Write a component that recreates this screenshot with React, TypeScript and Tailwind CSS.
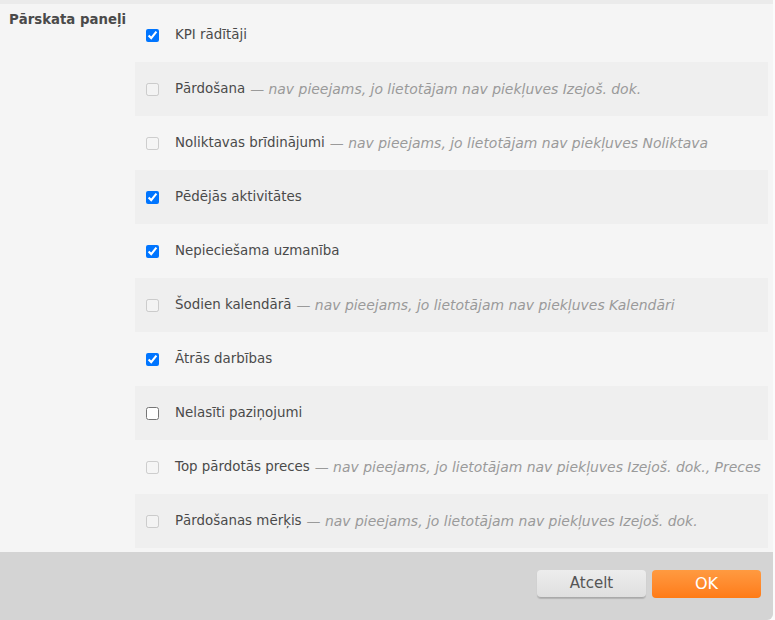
import React from "react";

type Panel = {
  id: string;
  label: string;
  checked?: boolean;
  locked?: string;
};

const panels: Panel[] = [
  { id: "kpi", label: "KPI rādītāji", checked: true },
  { id: "sales", label: "Pārdošana", locked: "Izejoš. dok." },
  { id: "stock", label: "Noliktavas brīdinājumi", locked: "Noliktava" },
  { id: "activity", label: "Pēdējās aktivitātes", checked: true },
  { id: "attention", label: "Nepieciešama uzmanība", checked: true },
  { id: "calendar", label: "Šodien kalendārā", locked: "Kalendāri" },
  { id: "quick", label: "Ātrās darbības", checked: true },
  { id: "unread", label: "Nelasīti paziņojumi" },
  { id: "top", label: "Top pārdotās preces", locked: "Izejoš. dok., Preces" },
  { id: "goal", label: "Pārdošanas mērķis", locked: "Izejoš. dok." },
];

const font = { fontFamily: '"DejaVu Sans", Verdana, sans-serif' };

function PanelRow({ panel, shaded }: { panel: Panel; shaded: boolean }) {
  const disabled = Boolean(panel.locked);
  return (
    <label
      className={`flex h-[54px] items-center pl-[11px] whitespace-nowrap ${shaded ? "bg-[#efefef]" : ""}`}
    >
      <input
        type="checkbox"
        defaultChecked={panel.checked}
        disabled={disabled}
        className="m-0 size-[13px] shrink-0"
      />
      <span className="ml-4 text-[13.4px] text-[#4a4a4a]">{panel.label}</span>
      {panel.locked && (
        <span className="ml-[5px] text-[13.95px] italic text-[#9a9a9a]">
          — nav pieejams, jo lietotājam nav piekļuves {panel.locked}
        </span>
      )}
    </label>
  );
}

export default function App() {
  return (
    <div className="h-[620px] w-[775px] overflow-hidden bg-[#fbfbfb]" style={font}>
      <div className="flex h-full w-[773px] flex-col overflow-hidden rounded-br-[6px] bg-[#f5f5f5]">
        <div className="h-1 shrink-0 bg-[#ebebeb]" />
        <div className="flex flex-1 pt-1">
          <div className="w-[135px] shrink-0 whitespace-nowrap pl-[9px] pt-[2px] text-[13.3px] font-bold text-[#4a4a4a]">
            Pārskata paneļi
          </div>
          <div className="w-[633px] overflow-hidden">
            {panels.map((panel, i) => (
              <PanelRow key={panel.id} panel={panel} shaded={i % 2 === 1} />
            ))}
          </div>
        </div>
        <div className="flex h-[68px] shrink-0 items-start justify-end gap-[6px] bg-[#d4d4d4] pr-3 pt-[18px]">
          <button className="h-[28px] w-[109px] rounded-[4px] border-b border-[#aaa] bg-gradient-to-b from-[#ededed] to-[#dfdfdf] text-[15px] text-[#555] shadow-[0_1px_1px_rgba(0,0,0,0.15)]">
            Atcelt
          </button>
          <button className="h-[28px] w-[109px] rounded-[4px] bg-gradient-to-b from-[#ff9a40] to-[#ff7b14] text-[16px] text-white">
            OK
          </button>
        </div>
      </div>
    </div>
  );
}
